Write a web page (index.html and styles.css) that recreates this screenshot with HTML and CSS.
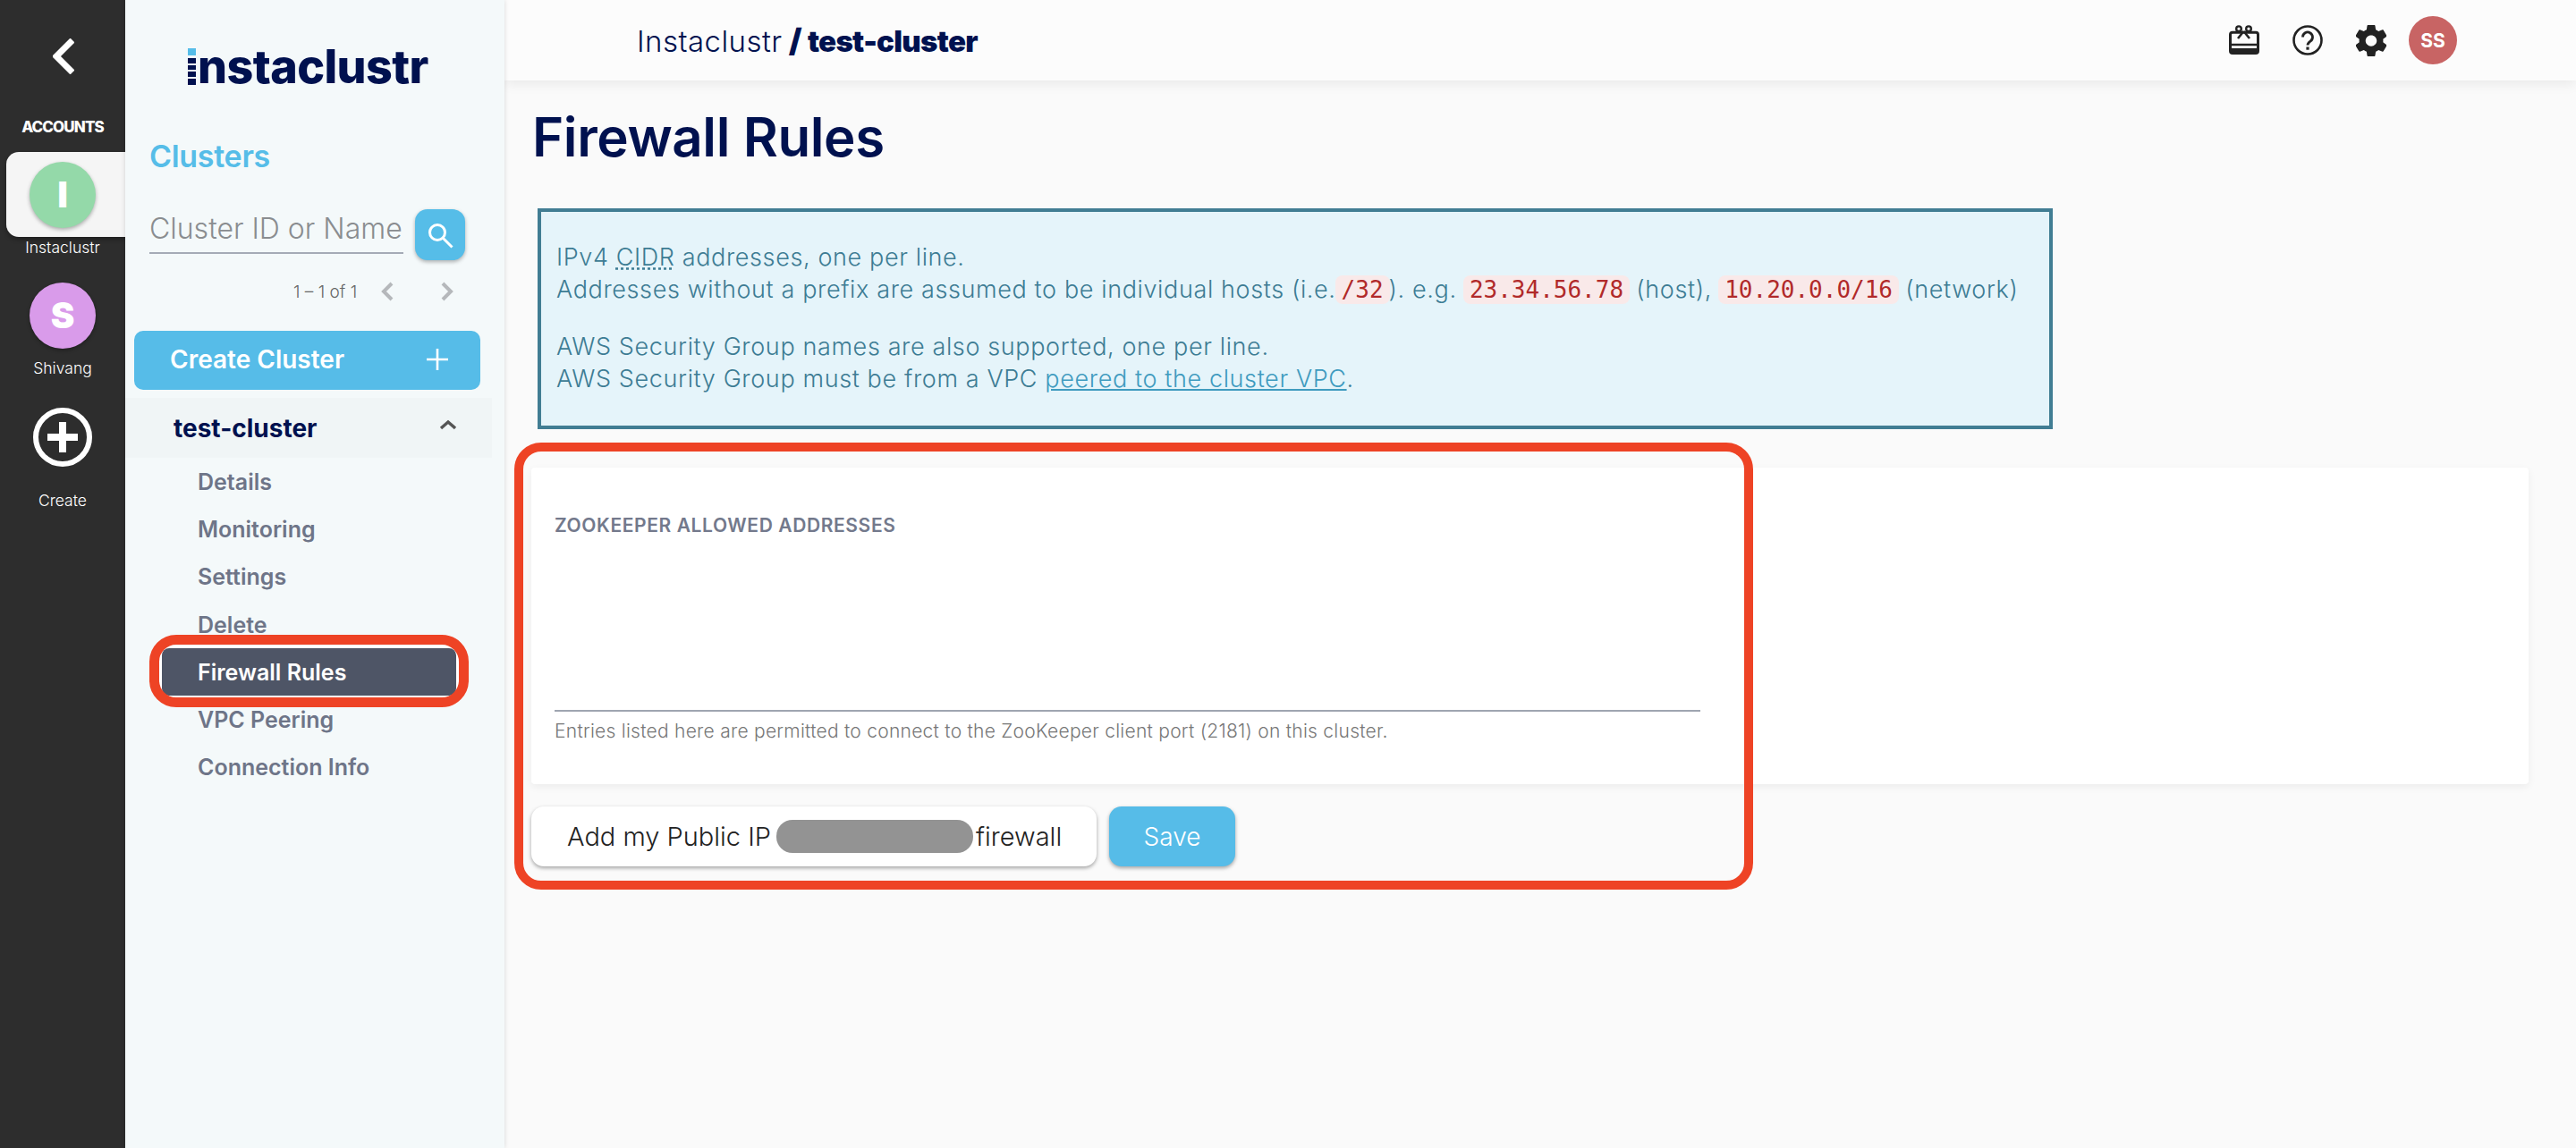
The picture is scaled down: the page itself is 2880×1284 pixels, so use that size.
FILE: index.html
```html
<!DOCTYPE html>
<html lang="en">
<head>
  <meta charset="UTF-8">
  <title>Firewall Rules - Instaclustr</title>
  <link rel="stylesheet" href="styles.css">
</head>
<body>
  <nav class="rail">
    <svg class="rail-back" width="24" height="40" viewBox="0 0 24 40"><path d="M22 2 4 20l18 18" fill="none" stroke="#fff" stroke-width="7"/></svg>
    <div class="rail-title">ACCOUNTS</div>
    <div class="account account-active">
      <div class="account-avatar avatar-green">I</div>
    </div>
    <div class="account-name">Instaclustr</div>
    <div class="account">
      <div class="account-avatar avatar-purple">S</div>
    </div>
    <div class="account-name">Shivang</div>
    <svg class="rail-create" width="66" height="66" viewBox="0 0 66 66">
      <circle cx="33" cy="33" r="30" fill="none" stroke="#fff" stroke-width="6"/>
      <path d="M16 33h34M33 16v34" stroke="#fff" stroke-width="8"/>
    </svg>
    <div class="account-name create-name">Create</div>
  </nav>

  <aside class="panel">
    <div class="logo">
      <svg width="9" height="41" viewBox="0 0 9 41">
        <rect width="9" height="8" fill="#56bde8"/>
        <rect y="11" width="9" height="6" fill="#00114f"/>
        <rect y="19" width="9" height="5" fill="#00114f"/>
        <rect y="26" width="9" height="6" fill="#00114f"/>
        <rect y="34" width="9" height="7" fill="#00114f"/>
      </svg>
      <span class="logo-text">nstaclustr</span>
    </div>
    <h2 class="panel-title">Clusters</h2>
    <div class="search">
      <div class="search-input">Cluster ID or Name</div>
      <button class="search-btn">
        <svg width="32" height="32" viewBox="0 0 32 32"><circle cx="13" cy="13" r="8.5" fill="none" stroke="#fff" stroke-width="3"/><path d="m19.5 19.5 10 10" stroke="#fff" stroke-width="3"/></svg>
      </button>
    </div>
    <div class="pager">
      <span>1 – 1 of 1</span>
      <svg class="pager-prev" width="16" height="24" viewBox="0 0 16 24"><path d="M13 3 4 12l9 9" fill="none" stroke="#b5b8bb" stroke-width="4"/></svg>
      <svg class="pager-next" width="16" height="24" viewBox="0 0 16 24"><path d="m3 3 9 9-9 9" fill="none" stroke="#b5b8bb" stroke-width="4"/></svg>
    </div>
    <button class="create-btn">
      <span>Create Cluster</span>
      <svg width="24" height="24" viewBox="0 0 24 24"><path d="M0 12h24M12 0v24" stroke="#fff" stroke-width="2.6"/></svg>
    </button>
    <div class="cluster-row">
      <span>test-cluster</span>
      <svg width="20" height="12" viewBox="0 0 20 12"><path d="m2 10 8-7 8 7" fill="none" stroke="#555" stroke-width="3.4"/></svg>
    </div>
    <ul class="menu">
      <li>Details</li>
      <li>Monitoring</li>
      <li>Settings</li>
      <li>Delete</li>
      <li class="menu-active">Firewall Rules</li>
      <li>VPC Peering</li>
      <li>Connection Info</li>
    </ul>
  </aside>

  <div class="main">
    <header class="topbar">
      <div class="crumbs"><span class="crumb-light">Instaclustr</span> <b class="crumb-slash">/</b> <b>test-cluster</b></div>
      <div class="topbar-icons">
        <svg width="34" height="34" viewBox="0 0 34 34">
          <rect x="1.5" y="8.2" width="31" height="23.300" rx="2.5" fill="none" stroke="#222" stroke-width="3"/>
          <path d="M1.500 20.700h31v2.600h-31zM1.500 26h31v5h-31z" fill="#222"/>
          <circle cx="11" cy="4.200" r="2.800" fill="none" stroke="#222" stroke-width="2.400"/>
          <circle cx="22" cy="4.200" r="2.800" fill="none" stroke="#222" stroke-width="2.400"/>
          <path d="M16.500 7 10 15M16.500 7 23 15" fill="none" stroke="#222" stroke-width="2.600"/>
        </svg>
        <svg width="34" height="34" viewBox="0 0 34 34">
          <circle cx="17" cy="17" r="15.500" fill="none" stroke="#222" stroke-width="2.600"/>
          <path d="M11.500 13.500a5.500 5.500 0 1 1 8.500 4.600c-2 1.400-3 2.200-3 4.400" fill="none" stroke="#222" stroke-width="2.800"/>
          <rect x="15.400" y="24.500" width="3.200" height="3.200" fill="#222"/>
        </svg>
        <svg width="34" height="35" viewBox="2.500 2 19 20" preserveAspectRatio="none">
          <path d="M19.430 12.980c.04-.32.070-.64.070-.98s-.030-.66-.070-.98l2.110-1.650c.190-.150.240-.420.120-.640l-2-3.460c-.120-.220-.390-.300-.610-.220l-2.490 1c-.520-.400-1.080-.730-1.690-.980l-.380-2.650C14.460 2.180 14.250 2 14 2h-4c-.250 0-.460.180-.490.420l-.380 2.650c-.610.250-1.170.590-1.690.980l-2.490-1c-.230-.090-.490 0-.610.220l-2 3.460c-.130.220-.070.490.120.640l2.110 1.650c-.040.320-.070.650-.070.980s.030.660.070.980l-2.110 1.650c-.190.150-.240.420-.120.640l2 3.460c.120.220.390.300.610.220l2.490-1c.520.400 1.080.730 1.690.980l.380 2.650c.030.240.240.420.490.420h4c.250 0 .460-.180.490-.420l.380-2.650c.610-.250 1.170-.590 1.690-.980l2.490 1c.230.090.490 0 .610-.220l2-3.460c.120-.220.070-.490-.120-.640l-2.110-1.650zM12 15.500c-1.930 0-3.500-1.570-3.500-3.500s1.570-3.500 3.500-3.500 3.500 1.570 3.500 3.500-1.570 3.500-3.500 3.500z" fill="#222"/>
        </svg>
        <div class="user-avatar">SS</div>
      </div>
    </header>

    <div class="content">
      <h1 class="page-title">Firewall Rules</h1>
      <div class="info-box">
        <p>IPv4 <abbr class="abbr">CIDR</abbr> addresses, one per line.<br>
        Addresses without a prefix are assumed to be individual hosts (i.e.<code>/32</code>). e.g. <code>23.34.56.78</code> (host), <code>10.20.0.0/16</code> (network)</p>
        <p>AWS Security Group names are also supported, one per line.<br>
        AWS Security Group must be from a VPC <a href="#">peered to the cluster VPC</a>.</p>
      </div>

      <form class="rules-form">
        <div class="card">
          <label class="field-label">ZOOKEEPER ALLOWED ADDRESSES</label>
          <div class="field-area"></div>
          <div class="field-help">Entries listed here are permitted to connect to the ZooKeeper client port (2181) on this cluster.</div>
        </div>
        <div class="form-actions">
          <button type="button" class="btn-ip"><span>Add my Public IP</span><span class="ip-mask"></span><span>firewall</span></button>
          <button type="button" class="btn-save">Save</button>
        </div>
        <div class="form-ring"></div>
      </form>
    </div>
  </div>
</body>
</html>
```

FILE: styles.css
```css
* {
  box-sizing: border-box;
}
body {
  margin: 0;
  height: 1284px;
  overflow: hidden;
  display: flex;
  font-family: Inter, "Liberation Sans", sans-serif;
  background-color: #fafafa;
  color: #00114f;
}
button {
  font-family: inherit;
  border: none;
}

/* accounts rail */
.rail {
  width: 140px;
  flex: none;
  background-color: #2d2d2d;
  color: #fff;
  display: flex;
  flex-direction: column;
  align-items: center;
}
.rail-back {
  margin-top: 43px;
  margin-left: 1px;
}
.rail-title {
  margin-top: 47px;
  font-size: 17px;
  line-height: 24px;
  font-weight: 800;
  letter-spacing: -0.9px;
}
.account {
  width: 100%;
  height: 95px;
  display: flex;
  align-items: center;
  justify-content: center;
}
.account-active {
  align-self: flex-start;
  margin-top: 16px;
  margin-left: 7px;
  width: 133px;
  padding-right: 7px;
  background-color: #f5f5f5;
  border-radius: 14px 0 0 14px;
  box-shadow: 0 3px 5px rgba(0, 0, 0, 0.3);
}
.account-avatar {
  width: 74px;
  height: 74px;
  border-radius: 50%;
  display: flex;
  align-items: center;
  justify-content: center;
  color: #fff;
  font-size: 40px;
  font-weight: 900;
  box-shadow: 0 2px 4px rgba(0, 0, 0, 0.3);
}
.avatar-green {
  background-color: #94d9a9;
}
.avatar-purple {
  background-color: #d99bea;
}
.account-name {
  height: 24px;
  font-size: 17.5px;
  line-height: 24px;
  font-weight: 300;
}
.account-name + .account {
  margin-top: 16px;
}
.rail-create {
  margin-top: 32px;
}
.create-name {
  margin-top: 26px;
}

/* clusters panel */
.panel {
  width: 424px;
  flex: none;
  background-color: #f4f9fa;
  box-shadow: 0 0 5px rgba(0, 0, 0, 0.15);
  display: flex;
  flex-direction: column;
  z-index: 2;
}
.logo {
  display: flex;
  align-items: center;
  margin: 54px 0 0 70px;
  height: 41px;
}
.logo-text {
  font-size: 52px;
  line-height: 41px;
  font-weight: 800;
  letter-spacing: -0.6px;
  color: #00114f;
  margin-left: 2px;
}
.panel-title {
  margin: 59px 0 0 27px;
  font-size: 34px;
  line-height: 42px;
  font-weight: 600;
  letter-spacing: -0.3px;
  color: #56bde8;
}
.search {
  display: flex;
  align-items: flex-start;
  margin: 38px 0 0 27px;
  height: 57px;
}
.search-input {
  width: 284px;
  height: 50px;
  border-bottom: 2px solid #a5abb6;
  font-size: 32px;
  line-height: 44px;
  font-weight: 300;
  color: #8a8d90;
  white-space: nowrap;
}
.search-btn {
  width: 56px;
  height: 57px;
  margin-left: 13px;
  border-radius: 14px;
  background-color: #56bde8;
  box-shadow: 0 2px 4px rgba(0, 0, 0, 0.3);
  display: flex;
  align-items: center;
  justify-content: center;
  padding: 0;
}
.pager {
  display: flex;
  align-items: center;
  margin: 23px 0 0 188px;
  height: 24px;
  font-size: 19px;
  font-weight: 300;
  color: #666;
}
.pager-prev {
  margin-left: 26px;
}
.pager-next {
  margin-left: 51px;
}
.create-btn {
  display: flex;
  align-items: center;
  justify-content: space-between;
  margin: 32px 0 0 10px;
  width: 387px;
  height: 66px;
  padding: 0 36px 2px 40px;
  border-radius: 10px;
  background-color: #56bce8;
  color: #fff;
  font-size: 28px;
  font-weight: 600;
}
.cluster-row {
  display: flex;
  align-items: center;
  justify-content: space-between;
  margin-top: 9px;
  width: 410px;
  height: 67px;
  padding: 0 39px 8px 54px;
  background-color: #f0f5f6;
  font-size: 28px;
  font-weight: 700;
}
.cluster-row span {
  padding-top: 8px;
}
.menu {
  list-style: none;
  margin: 0;
  padding: 0 0 0 41px;
}
.menu li {
  width: 329px;
  height: 53.2px;
  padding-left: 40px;
  font-size: 25px;
  line-height: 55px;
  font-weight: 600;
  color: #6e7588;
}
.menu .menu-active {
  position: relative;
  color: #fff;
  background-color: #4e5566;
  border-radius: 8px;
  box-shadow: 0 0 0 3px #fff;
}
.menu-active::after {
  content: "";
  position: absolute;
  top: -15px;
  right: -14px;
  bottom: -13px;
  left: -14px;
  border: 11px solid #ee4325;
  border-radius: 30px;
}

/* main column */
.main {
  flex: 1;
  min-width: 0;
  display: flex;
  flex-direction: column;
}
.topbar {
  height: 90px;
  flex: none;
  display: flex;
  align-items: center;
  justify-content: space-between;
  padding: 0 133px 0 148px;
  background-color: #fcfcfc;
  box-shadow: 0 3px 14px rgba(0, 0, 0, 0.08);
}
.crumbs {
  font-size: 33px;
  font-weight: 700;
  letter-spacing: -0.7px;
}
.crumb-light {
  font-weight: 300;
  letter-spacing: 0.45px;
}
.crumb-slash {
  font-size: 36px;
}
.topbar-icons {
  display: flex;
  align-items: center;
}
.topbar-icons svg {
  margin-right: 37px;
}
.topbar-icons svg:nth-child(3) {
  margin-right: 25px;
}
.user-avatar {
  width: 54px;
  height: 54px;
  border-radius: 50%;
  background-color: #c86464;
  color: #fff;
  font-size: 21px;
  font-weight: 700;
  display: flex;
  align-items: center;
  justify-content: center;
}
.content {
  padding: 0 53px 0 30px;
}
.page-title {
  margin: 24px 0 0 1px;
  font-size: 60px;
  line-height: 78px;
  font-weight: 600;
  letter-spacing: -0.4px;
}
.info-box {
  margin: 41px 0 0 7px;
  width: 1694px;
  height: 247px;
  padding: 33px 17px;
  border: 4px solid #417d93;
  background-color: #e5f4fa;
  color: #3d7c94;
  font-size: 27px;
  line-height: 36px;
  font-weight: 300;
  letter-spacing: 0.62px;
}
.info-box p {
  margin: 0 0 28px;
}
.info-box a {
  color: #3f9bbf;
}
.abbr {
  text-decoration: underline dotted;
}
code {
  font-family: "DejaVu Sans Mono", monospace;
  font-size: 26px;
  letter-spacing: 0;
  padding: 1px 7px;
  margin: 0 -1px;
  border-radius: 8px;
  background-color: #f9e9e9;
  color: #b12a2a;
}
.rules-form {
  position: relative;
  margin-top: 43px;
}
.card {
  height: 354px;
  padding: 50px 26px 0;
  background-color: #fff;
  border-radius: 4px;
  box-shadow: 0 3px 10px rgba(0, 0, 0, 0.06);
}
.field-label {
  display: block;
  font-size: 21px;
  line-height: 30px;
  font-weight: 600;
  letter-spacing: 0.6px;
  color: #73798c;
}
.field-area {
  width: 1281px;
  height: 193px;
  border-bottom: 2px solid #9fa5b1;
}
.field-help {
  margin-top: 10px;
  font-size: 21px;
  line-height: 24px;
  font-weight: 300;
  letter-spacing: 0.26px;
  color: #777;
}
.form-actions {
  display: flex;
  gap: 14px;
  margin-top: 25px;
}
.btn-ip,
.btn-save {
  height: 67px;
  border-radius: 14px;
  font-size: 28px;
  font-weight: 300;
  box-shadow: 0 2px 4px rgba(0, 0, 0, 0.35);
}
.btn-ip {
  width: 632px;
  padding: 0 0 0 40px;
  display: flex;
  align-items: center;
  font-size: 29px;
  background-color: #fff;
  color: #222;
}
.ip-mask {
  width: 220px;
  height: 37px;
  margin: 0 3px 0 6px;
  border-radius: 18px;
  background-color: #939393;
}
.btn-save {
  width: 141px;
  background-color: #56bce8;
  color: #fff;
}
.form-ring {
  position: absolute;
  top: -28px;
  left: -19px;
  width: 1385px;
  height: 500px;
  border: 10px solid #ee4325;
  border-radius: 30px;
  pointer-events: none;
}
```
